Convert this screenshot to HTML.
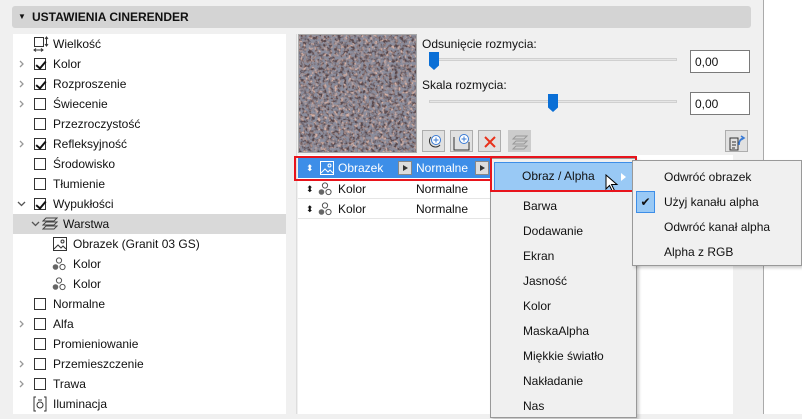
<!DOCTYPE html><html><head><meta charset="utf-8"><style>
*{margin:0;padding:0;box-sizing:border-box}
body{width:802px;height:414px;overflow:hidden;background:#f0f0f0;font-family:"Liberation Sans",sans-serif;font-size:12px;color:#111;position:relative}
.a{position:absolute}
.hdr{left:12px;top:6px;width:739px;height:22px;background:#d4d4d4;border-radius:3px;font-weight:bold;font-size:12px;line-height:22px;padding-left:20px}
.row{position:absolute;left:13px;width:273px;height:20px;line-height:20px}
.cb{position:absolute;left:21px;top:4px;width:12px;height:12px;border:1px solid #333;background:#fff}
.cb.c::after{content:"";position:absolute;left:3px;top:0px;width:4px;height:8px;border:solid #111;border-width:0 2px 2px 0;transform:rotate(40deg)}
.ex{position:absolute;left:6px;top:6px}
.t{position:absolute;left:40px}
.mi{position:absolute;left:32px;height:25px;line-height:25px}
.mi2{position:absolute;left:31px;line-height:25px}
.btn{position:absolute;top:130px;width:23px;height:22px;border:1px solid #adadad;background:#e1e1e1}
.btn svg{position:absolute;left:2px;top:2px}
.ab{position:absolute;top:3px;width:14px;height:14px;background:#ddd;border:1px solid #888}
.ab::after{content:"";position:absolute;left:4px;top:3px;border-left:5px solid #333;border-top:3px solid transparent;border-bottom:3px solid transparent}
</style></head><body>
<svg width="0" height="0" style="position:absolute"><defs>
<symbol id="chev" viewBox="0 0 6 8"><path d="M1 1l3 3-3 3" fill="none" stroke="#999" stroke-width="1.3"/></symbol>
<symbol id="col" viewBox="0 0 14 14"><circle cx="7" cy="3.5" r="2.6" fill="none" stroke="#555"/><circle cx="3.5" cy="10" r="2.8" fill="#666"/><circle cx="10.5" cy="10" r="2.6" fill="none" stroke="#555"/></symbol>
<symbol id="img" viewBox="0 0 14 14"><rect x="0.5" y="0.5" width="13" height="13" fill="none" stroke="#333"/><path d="M1 12l4-4 3 3 2-2 3 3" fill="none" stroke="#333"/><circle cx="9.5" cy="4.5" r="1.5" fill="none" stroke="#333"/></symbol>
<filter id="gr" x="0" y="0" width="1" height="1"><feTurbulence type="fractalNoise" baseFrequency="0.3" numOctaves="2" seed="3"/><feColorMatrix values="0 0 0 0 0.66  0 0 0 0 0.44  0 0 0 0 0.38  0 0 0 3.5 -1.4"/></filter>
<filter id="gr2" x="0" y="0" width="1" height="1"><feTurbulence type="fractalNoise" baseFrequency="0.35" numOctaves="2" seed="9"/><feColorMatrix values="0 0 0 0 0.26  0 0 0 0 0.27  0 0 0 0 0.34  0 0 0 3.5 -1.2"/></filter>
<filter id="gr3" x="0" y="0" width="1" height="1"><feTurbulence type="fractalNoise" baseFrequency="0.6" numOctaves="1" seed="5"/><feColorMatrix values="0 0 0 0 0.7  0 0 0 0 0.68  0 0 0 0 0.7  0 0 0 4 -2.9"/></filter>
</defs></svg>
<div class="a hdr"><span class="a" style="left:6px;top:0;font-size:8px">▼</span>USTAWIENIA CINERENDER</div>
<div class="a" style="left:13px;top:34px;width:273px;height:380px;background:#fff"></div>
<div class="a" style="left:763px;top:0;width:1px;height:414px;background:#aaa"></div>
<div class="a" style="left:764px;top:0;width:38px;height:414px;background:#fff"></div>
<div class="a" style="left:296px;top:34px;width:1px;height:380px;background:#ddd"></div>

<div class="row" style="top:34px"><svg class="a" style="left:20px;top:2px" width="16" height="16"><rect x="1.5" y="1.5" width="9" height="9" fill="none" stroke="#333"/><path d="M13.5 1v9M12 3l1.5-2 1.5 2M12 8l1.5 2 1.5-2M1 14h9M3 12.5l-2 1.5 2 1.5M8 12.5l2 1.5-2 1.5" fill="none" stroke="#333"/></svg><span class="t">Wielkość</span></div>
<div class="row" style="top:54px"><svg class="ex" width="6" height="8"><use href="#chev"/></svg><span class="cb c"></span><span class="t">Kolor</span></div>
<div class="row" style="top:74px"><svg class="ex" width="6" height="8"><use href="#chev"/></svg><span class="cb c"></span><span class="t">Rozproszenie</span></div>
<div class="row" style="top:94px"><svg class="ex" width="6" height="8"><use href="#chev"/></svg><span class="cb"></span><span class="t">Świecenie</span></div>
<div class="row" style="top:114px"><span class="cb"></span><span class="t">Przezroczystość</span></div>
<div class="row" style="top:134px"><svg class="ex" width="6" height="8"><use href="#chev"/></svg><span class="cb c"></span><span class="t">Refleksyjność</span></div>
<div class="row" style="top:154px"><span class="cb"></span><span class="t">Środowisko</span></div>
<div class="row" style="top:174px"><span class="cb"></span><span class="t">Tłumienie</span></div>
<div class="row" style="top:194px"><svg class="a" style="left:4px;top:7px" width="9" height="6"><path d="M1 1l3.5 3.5L8 1" fill="none" stroke="#555" stroke-width="1.3"/></svg><span class="cb c"></span><span class="t">Wypukłości</span></div>
<div class="row" style="top:214px;background:#d9d9d9"><svg class="a" style="left:18px;top:7px" width="9" height="6"><path d="M1 1l3.5 3.5L8 1" fill="none" stroke="#555" stroke-width="1.3"/></svg><svg class="a" style="left:29px;top:3px" width="16" height="14"><path d="M4 1h11l-3 3H1zM4 5h11l-3 3H1zM4 9h11l-3 3H1z" fill="none" stroke="#444"/></svg><span class="a" style="left:50px">Warstwa</span></div>
<div class="row" style="top:234px"><svg class="a" style="left:40px;top:3px" width="14" height="14"><use href="#img"/></svg><span class="a" style="left:60px">Obrazek (Granit 03 GS)</span></div>
<div class="row" style="top:254px"><svg class="a" style="left:39px;top:3px" width="14" height="14"><use href="#col"/></svg><span class="a" style="left:60px">Kolor</span></div>
<div class="row" style="top:274px"><svg class="a" style="left:39px;top:3px" width="14" height="14"><use href="#col"/></svg><span class="a" style="left:60px">Kolor</span></div>
<div class="row" style="top:294px"><span class="cb"></span><span class="t">Normalne</span></div>
<div class="row" style="top:314px"><svg class="ex" width="6" height="8"><use href="#chev"/></svg><span class="cb"></span><span class="t">Alfa</span></div>
<div class="row" style="top:334px"><span class="cb"></span><span class="t">Promieniowanie</span></div>
<div class="row" style="top:354px"><svg class="ex" width="6" height="8"><use href="#chev"/></svg><span class="cb"></span><span class="t">Przemieszczenie</span></div>
<div class="row" style="top:374px"><svg class="ex" width="6" height="8"><use href="#chev"/></svg><span class="cb"></span><span class="t">Trawa</span></div>
<div class="row" style="top:394px"><svg class="a" style="left:20px;top:2px" width="14" height="16"><path d="M3 1H1v14h2M11 1h2v14h-2" fill="none" stroke="#333"/><circle cx="7" cy="9" r="3" fill="none" stroke="#333"/><path d="M5 4h4" stroke="#333"/></svg><span class="t">Iluminacja</span></div>

<svg class="a" style="left:298px;top:34px" width="119" height="119"><rect width="119" height="119" fill="#55464b"/><rect width="119" height="119" filter="url(#gr)"/><rect width="119" height="119" filter="url(#gr2)"/><rect width="119" height="119" filter="url(#gr3)"/><rect x="0.5" y="0.5" width="118" height="118" fill="none" stroke="#aaa"/></svg>
<div class="a" style="left:422px;top:37px">Odsunięcie rozmycia:</div>
<div class="a" style="left:429px;top:58px;width:248px;height:3px;background:#e6e6e6;border:1px solid #d0d0d0"></div>
<div class="a" style="left:429px;top:52px;width:10px;height:18px;background:#0a6fd6;clip-path:polygon(0 0,100% 0,100% 75%,50% 100%,0 75%)"></div>
<div class="a" style="left:690px;top:50px;width:60px;height:23px;border:1px solid #7a7a7a;background:#fff;padding:4px 0 0 4px">0,00</div>
<div class="a" style="left:422px;top:78px">Skala rozmycia:</div>
<div class="a" style="left:429px;top:100px;width:248px;height:3px;background:#e6e6e6;border:1px solid #d0d0d0"></div>
<div class="a" style="left:548px;top:94px;width:10px;height:18px;background:#0a6fd6;clip-path:polygon(0 0,100% 0,100% 75%,50% 100%,0 75%)"></div>
<div class="a" style="left:690px;top:92px;width:60px;height:23px;border:1px solid #7a7a7a;background:#fff;padding:4px 0 0 4px">0,00</div>
<div class="btn" style="left:422px"><svg width="18" height="18"><path d="M6 4a6 6 0 1 0 9 8" fill="none" stroke="#333"/><circle cx="11" cy="7" r="4.5" fill="#fff" stroke="#3a7bd5"/><path d="M11 4.5v5M8.5 7h5" stroke="#3a7bd5"/></svg></div>
<div class="btn" style="left:450px"><svg width="18" height="18"><path d="M1 4v13h15V9" fill="none" stroke="#333"/><circle cx="11" cy="6" r="4.5" fill="#fff" stroke="#3a7bd5"/><path d="M11 3.5v5M8.5 6h5" stroke="#3a7bd5"/></svg></div>
<div class="btn" style="left:478px"><svg width="18" height="18"><path d="M4 4l10 10M14 4L4 14" stroke="#e8321c" stroke-width="2"/></svg></div>
<div class="btn" style="left:508px;background:#ccc;border-color:#ccc"><svg width="18" height="18"><path d="M5 3h11l-3 3H2zM5 8h11l-3 3H2zM5 13h11l-3 3H2z" fill="none" stroke="#999"/></svg></div>
<div class="btn" style="left:725px"><svg width="18" height="18"><path d="M2 5h8v12H2zM4 9h4M4 12h4M4 15h3" fill="none" stroke="#333"/><path d="M11 12c0-4 2-7 5-7M13 3l3 2-3 2" fill="none" stroke="#3a7bd5" stroke-width="1.6"/></svg></div>

<div class="a" style="left:298px;top:155px;width:192px;height:259px;background:#fff"></div>
<div class="a" style="left:636px;top:155px;width:100px;height:259px;background:#fff"></div>
<div class="a" style="left:733px;top:155px;width:30px;height:259px;background:#f0f0f0"></div>
<div class="a" style="left:298px;top:158px;width:192px;height:20px;background:#3d8ee8;color:#fff;line-height:20px">
<span class="a" style="left:8px;font-size:9px">⬍</span><svg class="a" style="left:22px;top:3px" width="14" height="14"><rect x="0.5" y="0.5" width="13" height="13" fill="none" stroke="#fff"/><path d="M1 12l4-4 3 3 2-2 3 3" fill="none" stroke="#fff"/><circle cx="9.5" cy="4.5" r="1.5" fill="none" stroke="#fff"/></svg><span class="a" style="left:40px">Obrazek</span>
<span class="ab" style="left:100px"></span>
<span class="a" style="left:118px">Normalne</span>
<span class="ab" style="left:177px"></span></div>
<div class="a" style="left:294px;top:156px;width:198px;height:25px;border:2px solid #e8141c"></div>
<div class="a" style="left:298px;top:179px;width:192px;height:20px;line-height:20px;border-bottom:1px solid #e5e5e5"><span class="a" style="left:8px;font-size:9px">⬍</span><svg class="a" style="left:20px;top:3px" width="14" height="14"><use href="#col"/></svg><span class="a" style="left:40px">Kolor</span><span class="a" style="left:118px">Normalne</span></div>
<div class="a" style="left:298px;top:199px;width:192px;height:20px;line-height:20px;border-bottom:1px solid #e5e5e5"><span class="a" style="left:8px;font-size:9px">⬍</span><svg class="a" style="left:20px;top:3px" width="14" height="14"><use href="#col"/></svg><span class="a" style="left:40px">Kolor</span><span class="a" style="left:118px">Normalne</span></div>

<div class="a" style="left:490px;top:158px;width:147px;height:260px;background:#f0f0f0;border:1px solid #999;box-shadow:2px 2px 3px rgba(0,0,0,.2)">
<div class="a" style="left:3px;top:3px;width:139px;height:29px;background:#99c9f5;border:1px solid #3d8ee8"></div>
<div class="mi" style="top:5px;left:31px">Obraz / Alpha</div>
<div class="a" style="left:130px;top:14px;border-left:5px solid #fff;border-top:4px solid transparent;border-bottom:4px solid transparent"></div>
<svg class="a" style="left:114px;top:15px" width="14" height="20"><path d="M1 1v14l3.5-3.5 3 6 2-1-3-6H12z" fill="#fff" stroke="#000"/></svg>
<div class="mi" style="top:35px">Barwa</div>
<div class="mi" style="top:60px">Dodawanie</div>
<div class="mi" style="top:85px">Ekran</div>
<div class="mi" style="top:110px">Jasność</div>
<div class="mi" style="top:135px">Kolor</div>
<div class="mi" style="top:160px">MaskaAlpha</div>
<div class="mi" style="top:185px">Miękkie światło</div>
<div class="mi" style="top:210px">Nakładanie</div>
<div class="mi" style="top:235px">Nas</div>
</div>
<div class="a" style="left:490px;top:156px;width:147px;height:36px;border:2px solid #e8141c"></div>

<div class="a" style="left:632px;top:160px;width:170px;height:106px;background:#f0f0f0;border:1px solid #999;box-shadow:2px 2px 3px rgba(0,0,0,.2)">
<div class="a" style="left:3px;top:30px;width:19px;height:22px;background:#99c9f5;border:1px solid #3d8ee8;text-align:center;line-height:20px;font-size:12px">✔</div>
<div class="mi2" style="top:4px">Odwróć obrazek</div>
<div class="mi2" style="top:29px">Użyj kanału alpha</div>
<div class="mi2" style="top:54px">Odwróć kanał alpha</div>
<div class="mi2" style="top:79px">Alpha z RGB</div>
</div>
</body></html>
